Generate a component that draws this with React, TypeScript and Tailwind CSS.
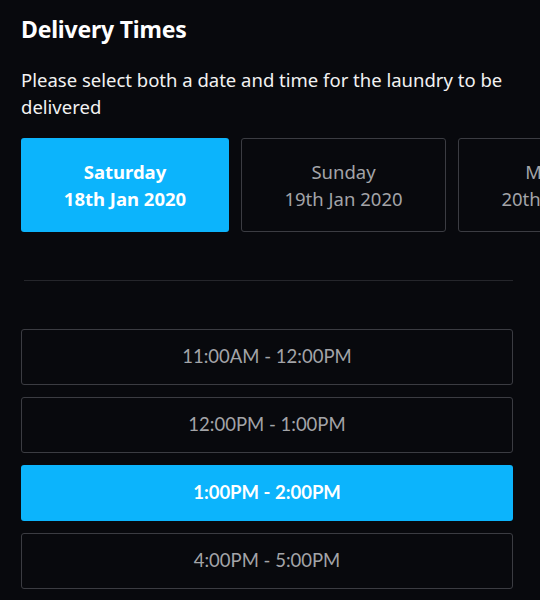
import { useState } from "react";

const dates = [
  { day: "Saturday", date: "18th Jan 2020" },
  { day: "Sunday", date: "19th Jan 2020" },
  { day: "Monday", date: "20th Jan 2020" },
];

const slots = [
  "11:00AM - 12:00PM",
  "12:00PM - 1:00PM",
  "1:00PM - 2:00PM",
  "4:00PM - 5:00PM",
];

export default function App() {
  const [day, setDay] = useState(0);
  const [slot, setSlot] = useState(2);

  return (
    <div className="w-[540px] h-[600px] overflow-hidden bg-[#08090d] text-white font-['Noto_Sans',sans-serif]">
      <div className="pl-[21px] pt-[13px]">
        <h1 className="text-[23px] leading-[32px] font-bold tracking-[-0.2px]">
          Delivery Times
        </h1>
        <p className="mt-[21px] pr-[20px] text-[18.5px] leading-[27px] text-[#f2f2f2]">
          Please select both a date and time for the laundry to be delivered
        </p>
        <div className="mt-[18px] flex gap-3 overflow-hidden">
          {dates.map((d, i) => (
            <button
              key={d.date}
              onClick={() => setDay(i)}
              className={
                i === day
                  ? "shrink-0 w-[208px] h-[94px] rounded-[3px] bg-[#0cb4fc] text-white font-bold text-[18.5px] leading-[27px] flex flex-col items-center justify-center"
                  : "shrink-0 w-[205px] h-[94px] rounded-[3px] border border-[#3b3c42] text-[#a3a4a8] text-[18.5px] leading-[27px] flex flex-col items-center justify-center"
              }
            >
              <span>{d.day}</span>
              <span>{d.date}</span>
            </button>
          ))}
        </div>
      </div>
      <div className="pl-[21px] pr-[27px]">
        <div className="mt-[48px] ml-[3px] h-px bg-[#25262b]" />
        <div className="mt-[48px] flex flex-col gap-3 font-['Lato',sans-serif]">
          {slots.map((s, i) => (
            <button
              key={s}
              onClick={() => setSlot(i)}
              className={
                i === slot
                  ? "h-[56px] rounded-[3px] bg-[#0cb4fc] text-white font-bold text-[18.5px]"
                  : "h-[56px] rounded-[3px] border border-[#3b3c42] text-[#a3a4a8] text-[18.5px]"
              }
            >
              {s}
            </button>
          ))}
        </div>
      </div>
    </div>
  );
}
